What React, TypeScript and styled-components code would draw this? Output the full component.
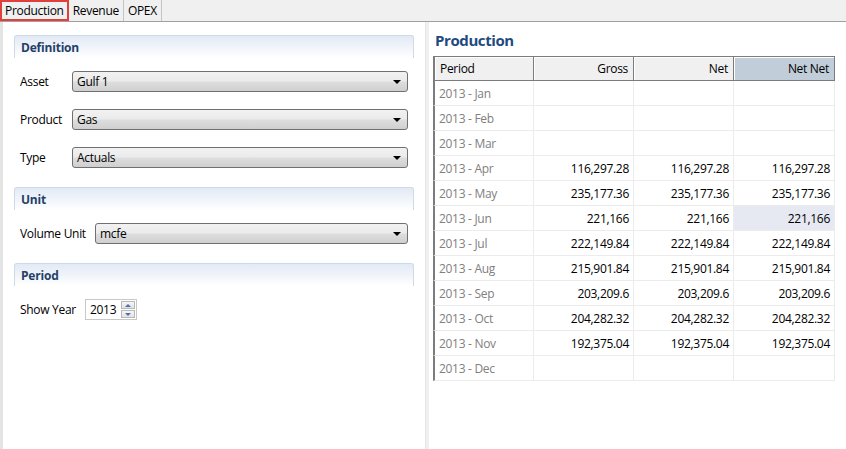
import React from "react";
import styled, { createGlobalStyle } from "styled-components";

const GlobalStyle = createGlobalStyle`
  html, body { margin: 0; padding: 0; background: #ffffff; }
  body { font-family: "Open Sans", "Noto Sans", "DejaVu Sans", sans-serif; font-size: 12px; color: #000; }
  * { box-sizing: border-box; }
`;

const Frame = styled.div`
  width: 846px;
  height: 449px;
  display: flex;
  flex-direction: column;
  overflow: hidden;
  background: #fff;
`;

const TabBar = styled.div`
  height: 22px;
  display: flex;
  align-items: stretch;
  background: #f0f0f0;
  border-bottom: 1px solid #a0a0a0;
`;

const Tab = styled.div<{ $active?: boolean }>`
  display: flex;
  align-items: center;
  padding: 0 ${(p) => (p.$active ? "3px" : "4px")};
  height: 21px;
  border: ${(p) => (p.$active ? "2px solid #e0403c" : "none")};
  border-right: ${(p) => (p.$active ? "2px solid #e0403c" : "1px solid #c4c4c4")};
  letter-spacing: -0.3px;
  color: #000;
  font-size: 12px;
`;

const Body = styled.div`
  flex: 1;
  display: flex;
  min-height: 0;
`;

const LeftPanel = styled.div`
  width: 425px;
  border-left: 3px solid #e4e4e4;
  padding: 13px 11px 0 11px;
  display: flex;
  flex-direction: column;
`;

const Divider = styled.div`
  width: 4px;
  background: #f0f0f0;
  border-left: 1px solid #e6e6e6;
`;

const RightPanel = styled.div`
  flex: 1;
  padding: 8px 0 0 4px;
  display: flex;
  flex-direction: column;
`;

const Section = styled.div`
  display: flex;
  flex-direction: column;
`;

const SectionHeader = styled.div`
  height: 23px;
  border: 1px solid #cfdae8;
  border-bottom: none;
  border-radius: 3px 3px 0 0;
  background: linear-gradient(to bottom, #e2eaf5 0%, #f3f6fb 60%, #ffffff 100%);
  color: #253f68;
  font-weight: 700;
  font-size: 12px;
  padding: 3px 6px 0 6px;
  letter-spacing: -0.2px;
`;

const SectionBody = styled.div`
  padding: 13px 6px 19px 6px;
  display: flex;
  flex-direction: column;
  gap: 17px;
`;

const FieldRow = styled.div<{ $labelWidth: number }>`
  display: grid;
  grid-template-columns: ${(p) => p.$labelWidth}px 1fr;
  align-items: center;
  height: 21px;
`;

const Label = styled.span`
  font-size: 12px;
  color: #000;
  letter-spacing: -0.3px;
`;

const Combo = styled.div`
  height: 21px;
  border: 1px solid #707070;
  border-radius: 3px;
  background: linear-gradient(to bottom, #f2f2f2 0%, #ebebeb 45%, #dddddd 55%, #cfcfcf 100%);
  display: flex;
  align-items: center;
  justify-content: space-between;
  padding: 0 6px 0 4px;
  font-size: 12px;
  letter-spacing: -0.3px;
`;

const Arrow = styled.span`
  width: 0;
  height: 0;
  border-left: 4px solid transparent;
  border-right: 4px solid transparent;
  border-top: 4px solid #000;
`;

const Spinner = styled.div`
  width: 52px;
  height: 21px;
  display: flex;
  border: 1px solid #c8c8c8;
  background: #fff;
`;

const SpinValue = styled.div`
  flex: 1;
  display: flex;
  align-items: center;
  padding-left: 4px;
  font-size: 12px;
  letter-spacing: -0.3px;
`;

const SpinButtons = styled.div`
  width: 15px;
  display: flex;
  flex-direction: column;
  gap: 1px;
  padding: 1px 1px 1px 0;
`;

const SpinButton = styled.div<{ $down?: boolean }>`
  flex: 1;
  border: 1px solid #b8b8b8;
  background: linear-gradient(to bottom, #f6f6f6, #e2e2e2);
  display: flex;
  align-items: center;
  justify-content: center;
  &::after {
    content: "";
    width: 0;
    height: 0;
    border-left: 3px solid transparent;
    border-right: 3px solid transparent;
    ${(p) => (p.$down ? "border-top: 3px solid #4a6fb0;" : "border-bottom: 3px solid #4a6fb0;")}
  }
`;

const Title = styled.div`
  color: #1f4a80;
  font-weight: 700;
  font-size: 15px;
  height: 26px;
  letter-spacing: -0.4px;
  padding-left: 2px;
`;

const Table = styled.div`
  width: 402px;
  display: grid;
  grid-template-columns: 100px 100px 100px 102px;
`;

const HeadCell = styled.div<{ $align?: "left" | "right"; $sorted?: boolean; $first?: boolean; $last?: boolean }>`
  height: 25px;
  display: flex;
  align-items: center;
  justify-content: ${(p) => (p.$align === "left" ? "flex-start" : "flex-end")};
  padding: 0 5px;
  background: ${(p) => (p.$sorted ? "#c1cdd9" : "#f0f0f0")};
  border-top: 1px solid #7c7c7c;
  border-bottom: 1px solid #7c7c7c;
  border-left: ${(p) => (p.$first ? "2px solid #7c7c7c" : "1px solid #7c7c7c")};
  border-right: ${(p) => (p.$last ? "1px solid #7c7c7c" : "none")};
  box-shadow: inset 1px 1px 0 #ffffff;
  font-size: 12px;
  letter-spacing: -0.3px;
  color: #000;
`;

const Cell = styled.div<{ $period?: boolean; $selected?: boolean; $last?: boolean }>`
  height: 25px;
  display: flex;
  align-items: center;
  justify-content: ${(p) => (p.$period ? "flex-start" : "flex-end")};
  padding: 0 4px;
  background: ${(p) => (p.$selected ? "#e6e9f2" : "#ffffff")};
  border-bottom: 1px solid #ececec;
  border-left: ${(p) => (p.$period ? "2px solid #7c7c7c" : "1px solid #ececec")};
  border-right: ${(p) => (p.$last ? "1px solid #ececec" : "none")};
  color: ${(p) => (p.$period ? "#808080" : "#000")};
  font-size: 12px;
  letter-spacing: -0.3px;
`;

type Row = { period: string; vals: string[] };

const rows: Row[] = [
  { period: "2013 - Jan", vals: ["", "", ""] },
  { period: "2013 - Feb", vals: ["", "", ""] },
  { period: "2013 - Mar", vals: ["", "", ""] },
  { period: "2013 - Apr", vals: ["116,297.28", "116,297.28", "116,297.28"] },
  { period: "2013 - May", vals: ["235,177.36", "235,177.36", "235,177.36"] },
  { period: "2013 - Jun", vals: ["221,166", "221,166", "221,166"] },
  { period: "2013 - Jul", vals: ["222,149.84", "222,149.84", "222,149.84"] },
  { period: "2013 - Aug", vals: ["215,901.84", "215,901.84", "215,901.84"] },
  { period: "2013 - Sep", vals: ["203,209.6", "203,209.6", "203,209.6"] },
  { period: "2013 - Oct", vals: ["204,282.32", "204,282.32", "204,282.32"] },
  { period: "2013 - Nov", vals: ["192,375.04", "192,375.04", "192,375.04"] },
  { period: "2013 - Dec", vals: ["", "", ""] },
];

const ComboField = ({ label, value, labelWidth }: { label: string; value: string; labelWidth: number }) => (
  <FieldRow $labelWidth={labelWidth}>
    <Label>{label}</Label>
    <Combo>
      <span>{value}</span>
      <Arrow />
    </Combo>
  </FieldRow>
);

export default function App() {
  return (
    <>
      <GlobalStyle />
      <Frame>
        <TabBar>
          <Tab $active>Production</Tab>
          <Tab>Revenue</Tab>
          <Tab>OPEX</Tab>
        </TabBar>
        <Body>
          <LeftPanel>
            <Section>
              <SectionHeader>Definition</SectionHeader>
              <SectionBody>
                <ComboField label="Asset" value="Gulf 1" labelWidth={52} />
                <ComboField label="Product" value="Gas" labelWidth={52} />
                <ComboField label="Type" value="Actuals" labelWidth={52} />
              </SectionBody>
            </Section>
            <Section>
              <SectionHeader>Unit</SectionHeader>
              <SectionBody>
                <ComboField label="Volume Unit" value="mcfe" labelWidth={75} />
              </SectionBody>
            </Section>
            <Section>
              <SectionHeader>Period</SectionHeader>
              <SectionBody>
                <FieldRow $labelWidth={65}>
                  <Label>Show Year</Label>
                  <Spinner>
                    <SpinValue>2013</SpinValue>
                    <SpinButtons>
                      <SpinButton />
                      <SpinButton $down />
                    </SpinButtons>
                  </Spinner>
                </FieldRow>
              </SectionBody>
            </Section>
          </LeftPanel>
          <Divider />
          <RightPanel>
            <Title>Production</Title>
            <Table>
              <HeadCell $align="left" $first>Period</HeadCell>
              <HeadCell>Gross</HeadCell>
              <HeadCell>Net</HeadCell>
              <HeadCell $sorted $last>Net Net</HeadCell>
              {rows.map((r) => (
                <React.Fragment key={r.period}>
                  <Cell $period>{r.period}</Cell>
                  {r.vals.map((v, i) => (
                    <Cell key={i} $last={i === 2} $selected={r.period === "2013 - Jun" && i === 2}>
                      {v}
                    </Cell>
                  ))}
                </React.Fragment>
              ))}
            </Table>
          </RightPanel>
        </Body>
      </Frame>
    </>
  );
}
